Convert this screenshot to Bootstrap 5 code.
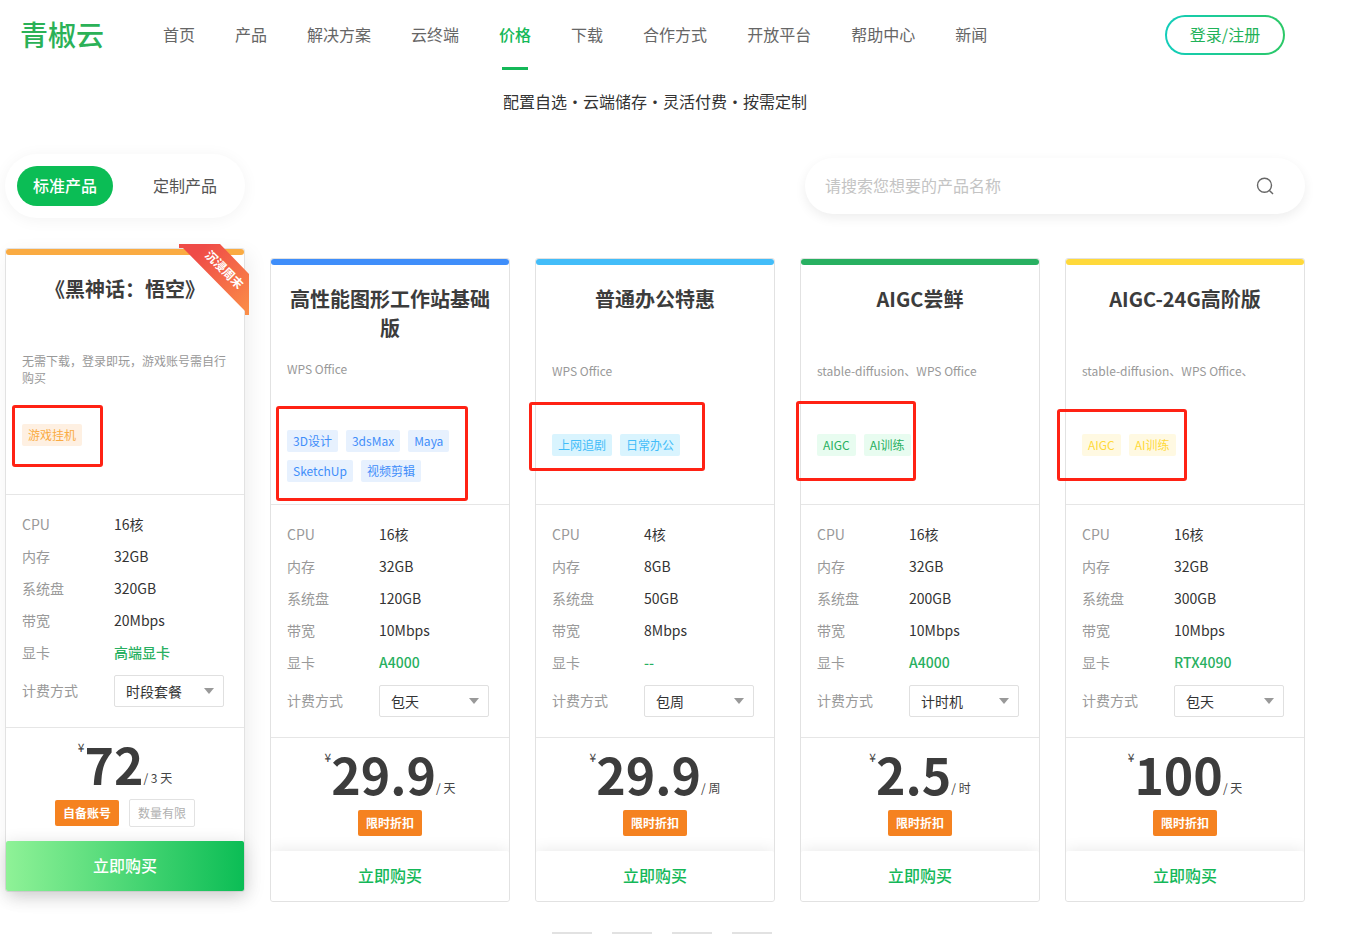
<!DOCTYPE html>
<html lang="zh-CN">
<head>
<meta charset="utf-8">
<meta name="viewport" content="width=device-width, initial-scale=1">
<title>青椒云 - 价格</title>
<link href="https://cdn.jsdelivr.net/npm/bootstrap@5.3.0/dist/css/bootstrap.min.css" rel="stylesheet">
<style>
  body { font-family: "Noto Sans CJK SC", sans-serif; font-size: 14px; color: #333; background: #fff; overflow-x: hidden; }
  a { text-decoration: none; }
  .page { padding-left: 5px; padding-right: 54px; }

  .site-bar { height: 70px; padding: 0 20px 0 15px; }
  .brand { font-size: 28px; line-height: 40px; padding-bottom: 2px; font-weight: 500; color: #2bb157; margin-right: 59px; }
  .site-links { gap: 40px; font-size: 16px; }
  .site-links .nav-link { padding: 0 0 2px; line-height: 68px; color: #666; position: relative; white-space: nowrap; }
  .site-links .nav-link.active { color: #14b858; font-weight: 500; }
  .site-links .nav-link.active::after { content: ""; position: absolute; left: 3px; right: 3px; bottom: 0; height: 3px; background: #14b858; }
  .btn-login { width: 120px; height: 40px; padding: 0 0 2px; font-size: 16px; border: 2px solid transparent; border-radius: 20px; color: #1fb259;
    background: linear-gradient(#fff, #fff) padding-box, linear-gradient(90deg, #12cdbb, #2bc866) border-box; }

  .slogan { font-size: 16px; line-height: 24px; margin: 19px 0 41px; }

  .switch { gap: 24px; padding: 12px; border-radius: 32px; box-shadow: 0 2px 16px rgba(0,0,0,.05); }
  .switch .btn { width: 96px; height: 40px; padding: 0 0 2px; border: 0; border-radius: 20px; font-size: 16px; color: #555; }
  .switch .btn.active { background: #0bbd55; color: #fff; font-weight: 500; }
  .finder { width: 500px; height: 56px; padding: 0 30px 0 20px; border-radius: 28px; box-shadow: 0 4px 12px rgba(0,0,0,.07); }
  .finder .form-control { padding: 0 0 2px; border: 0; box-shadow: none; font-size: 16px; background: transparent; }
  .finder .form-control::placeholder { color: #c4c4c4; }

  .plans { display: grid; grid-template-columns: repeat(5, minmax(0, 1fr)); gap: 25px; margin-top: 40px; align-items: start; }
  .plan { --tone: #3f8efa; --tint: #e7f1fe; position: relative; border: 1px solid #e2e2e2; border-radius: 3px; background: #fff; }
  .plan::before { content: ""; display: block; height: 6px; border-radius: 3px; background: var(--tone); }
  .plan.orange { --tone: #faab42; --tint: #fef0e2; }
  .plan.sky { --tone: #43bdf9; --tint: #d9f4fe; }
  .plan.green { --tone: #28b061; --tint: #e8fcf0; }
  .plan.yellow { --tone: #ffd93b; --tint: #fff9e2; }
  .plan.hot { margin-top: -10px; box-shadow: 4px 6px 20px rgba(0,0,0,.07); }

  .plan-head { height: 240px; padding: 19px 16px 0; border-bottom: 1px solid #e6e6e6; }
  .plan-title { font-size: 20px; line-height: 29px; min-height: 60px; margin: 0 0 18px; font-weight: 700; color: #3c3c3c; text-align: center; }
  .two-line { margin-bottom: 16px; }
  .plan-note { font-size: 12px; line-height: 17px; min-height: 72px; margin: 0; color: #999; }
  .two-line + .plan-note { min-height: 70px; }
  .tag { height: 22px; padding: 0 6px; border-radius: 2px; font-size: 12px; line-height: 22px; background: var(--tint); color: var(--tone); }
  .marker { position: absolute; border: 3px solid #ff2214; border-radius: 3px; pointer-events: none; }
  .orange .marker { left: 6px; top: 156px; width: 91px; height: 62px; }
  .blue .marker { left: 5px; top: 147px; width: 192px; height: 95px; }
  .sky .marker { left: -7px; top: 143px; width: 176px; height: 69px; }
  .green .marker { left: -5px; top: 142px; width: 120px; height: 80px; }
  .yellow .marker { left: -9px; top: 150px; width: 130px; height: 72px; }

  .specs { height: 233px; padding: 13px 16px 0; border-bottom: 1px solid #e6e6e6; }
  .specs dl { display: grid; grid-template-columns: 92px 1fr; line-height: 32px; margin: 0 0 7px; }
  .specs dt, .specs label { font-weight: 400; color: #999; }
  .specs dd { margin: 0; }
  .specs .gpu { color: #28b061; font-weight: 500; }
  .specs label { width: 92px; padding-bottom: 2px; }
  .specs .form-select { width: 110px; height: 32px; padding: 0 24px 0 11px; border-color: #e0e0e0; border-radius: 2px; font-size: 14px; line-height: 30px; color: #333;
    background-size: 10px 6px; background-position: right 9px center;
    background-image: url("data:image/svg+xml,%3Csvg xmlns='http://www.w3.org/2000/svg' viewBox='0 0 10 6'%3E%3Cpath d='M0 0h10L5 6z' fill='%23999'/%3E%3C/svg%3E"); }

  .cost { height: 113px; padding-top: 9px; }
  .cost-row { height: 54px; font-size: 12px; color: #444; }
  .cost-row strong { font-size: 50px; line-height: 52px; font-weight: 700; color: #3c3c3c; }
  .cost-row .coin { line-height: 20px; }
  .cost-row .per { line-height: 18px; padding-bottom: 4px; }
  .perks { height: 28px; gap: 10px; margin-top: 8px; font-size: 12px; }
  .perk { width: 64px; line-height: 26px; border-radius: 2px; text-align: center; background: #f58220; color: #fff; font-weight: 700; }
  .perk-line { width: 66px; line-height: 26px; border: 1px solid #e2e2e2; border-radius: 2px; text-align: center; color: #b0b0b0; }
  .btn-buy { height: 50px; padding: 0 0 2px; border: 0; border-radius: 2px; font-size: 16px; font-weight: 500; color: #14b858; background: #fff; box-shadow: 0 0 16px rgba(0,0,0,.1); clip-path: inset(-16px 0 0 0); }
  .hot .btn-buy { color: #fff; background: linear-gradient(90deg, #8ff297, #0bbd55); box-shadow: 0 4px 18px rgba(0,0,0,.16); clip-path: none; }

  .ribbon { position: absolute; right: -5px; top: -5px; width: 70px; height: 71px; }
  .pager { gap: 20px; margin: 30px 0 0 14px; }
  .pager button { width: 40px; height: 2px; padding: 0; border: 0; background: #e2e2e2; }
</style>
</head>
<body>
<header class="page">
  <nav class="site-bar d-flex align-items-center">
    <a class="brand" href="#">青椒云</a>
    <div class="nav site-links flex-nowrap">
      <a class="nav-link" href="#">首页</a>
      <a class="nav-link" href="#">产品</a>
      <a class="nav-link" href="#">解决方案</a>
      <a class="nav-link" href="#">云终端</a>
      <a class="nav-link active" href="#" aria-current="page">价格</a>
      <a class="nav-link" href="#">下载</a>
      <a class="nav-link" href="#">合作方式</a>
      <a class="nav-link" href="#">开放平台</a>
      <a class="nav-link" href="#">帮助中心</a>
      <a class="nav-link" href="#">新闻</a>
    </div>
    <button class="btn btn-login ms-auto" type="button">登录/注册</button>
  </nav>
</header>

<main class="page">
  <p class="slogan text-center">配置自选・云端储存・灵活付费・按需定制</p>

  <div class="d-flex justify-content-between align-items-center">
    <div class="switch d-flex">
      <button class="btn active" type="button">标准产品</button>
      <button class="btn" type="button">定制产品</button>
    </div>
    <form class="finder d-flex align-items-center" role="search">
      <input class="form-control" type="text" placeholder="请搜索您想要的产品名称" aria-label="产品名称">
      <button class="btn p-0 border-0 lh-1" type="button" aria-label="搜索">
        <svg width="20" height="20" viewBox="0 0 20 20" fill="none" stroke="#666" stroke-width="1.4"><circle cx="9.5" cy="9.3" r="7"/><path d="M14.4 14.4 18 18"/></svg>
      </button>
    </form>
  </div>

  <section class="plans">
    <article class="plan orange hot">
      <div class="plan-head">
        <h2 class="plan-title">《黑神话：悟空》</h2>
        <p class="plan-note">无需下载，登录即玩，游戏账号需自行购买</p>
        <div class="d-flex flex-wrap gap-2"><span class="tag">游戏挂机</span></div>
      </div>
      <div class="specs">
        <dl><dt>CPU</dt><dd>16核</dd><dt>内存</dt><dd>32GB</dd><dt>系统盘</dt><dd>320GB</dd><dt>带宽</dt><dd>20Mbps</dd><dt>显卡</dt><dd class="gpu">高端显卡</dd></dl>
        <div class="d-flex align-items-center"><label for="bill1">计费方式</label><select class="form-select" id="bill1"><option>时段套餐</option></select></div>
      </div>
      <div class="cost">
        <div class="cost-row d-flex justify-content-center"><span class="coin">¥</span><strong>72</strong><span class="per align-self-end">/ 3 天</span></div>
        <div class="perks d-flex justify-content-center align-items-center"><span class="perk">自备账号</span><span class="perk-line">数量有限</span></div>
      </div>
      <button class="btn btn-buy d-block w-100" type="button">立即购买</button>
      <svg class="ribbon" viewBox="0 0 70 71">
        <defs><linearGradient id="rib" x1="0" y1="0" x2="1" y2="1"><stop offset=".2" stop-color="#ef4b47"/><stop offset="1" stop-color="#fb8f48"/></linearGradient></defs>
        <path d="M0 0H41L70 30V71H66V67L4 4H0Z" fill="url(#rib)"/>
        <text transform="translate(45 26) rotate(45)" text-anchor="middle" y="4" font-size="12" font-weight="700" fill="#fff">沉浸周末</text>
      </svg>
      <div class="marker"></div>
    </article>

    <article class="plan blue">
      <div class="plan-head">
        <h2 class="plan-title two-line">高性能图形工作站基础版</h2>
        <p class="plan-note">WPS Office</p>
        <div class="d-flex flex-wrap gap-2"><span class="tag">3D设计</span><span class="tag">3dsMax</span><span class="tag">Maya</span><span class="tag">SketchUp</span><span class="tag">视频剪辑</span></div>
      </div>
      <div class="specs">
        <dl><dt>CPU</dt><dd>16核</dd><dt>内存</dt><dd>32GB</dd><dt>系统盘</dt><dd>120GB</dd><dt>带宽</dt><dd>10Mbps</dd><dt>显卡</dt><dd class="gpu">A4000</dd></dl>
        <div class="d-flex align-items-center"><label for="bill2">计费方式</label><select class="form-select" id="bill2"><option>包天</option></select></div>
      </div>
      <div class="cost">
        <div class="cost-row d-flex justify-content-center"><span class="coin">¥</span><strong>29.9</strong><span class="per align-self-end">/ 天</span></div>
        <div class="perks d-flex justify-content-center align-items-center"><span class="perk">限时折扣</span></div>
      </div>
      <button class="btn btn-buy d-block w-100" type="button">立即购买</button>
      <div class="marker"></div>
    </article>

    <article class="plan sky">
      <div class="plan-head">
        <h2 class="plan-title">普通办公特惠</h2>
        <p class="plan-note">WPS Office</p>
        <div class="d-flex flex-wrap gap-2"><span class="tag">上网追剧</span><span class="tag">日常办公</span></div>
      </div>
      <div class="specs">
        <dl><dt>CPU</dt><dd>4核</dd><dt>内存</dt><dd>8GB</dd><dt>系统盘</dt><dd>50GB</dd><dt>带宽</dt><dd>8Mbps</dd><dt>显卡</dt><dd class="gpu">--</dd></dl>
        <div class="d-flex align-items-center"><label for="bill3">计费方式</label><select class="form-select" id="bill3"><option>包周</option></select></div>
      </div>
      <div class="cost">
        <div class="cost-row d-flex justify-content-center"><span class="coin">¥</span><strong>29.9</strong><span class="per align-self-end">/ 周</span></div>
        <div class="perks d-flex justify-content-center align-items-center"><span class="perk">限时折扣</span></div>
      </div>
      <button class="btn btn-buy d-block w-100" type="button">立即购买</button>
      <div class="marker"></div>
    </article>

    <article class="plan green">
      <div class="plan-head">
        <h2 class="plan-title">AIGC尝鲜</h2>
        <p class="plan-note">stable-diffusion、WPS Office</p>
        <div class="d-flex flex-wrap gap-2"><span class="tag">AIGC</span><span class="tag">AI训练</span></div>
      </div>
      <div class="specs">
        <dl><dt>CPU</dt><dd>16核</dd><dt>内存</dt><dd>32GB</dd><dt>系统盘</dt><dd>200GB</dd><dt>带宽</dt><dd>10Mbps</dd><dt>显卡</dt><dd class="gpu">A4000</dd></dl>
        <div class="d-flex align-items-center"><label for="bill4">计费方式</label><select class="form-select" id="bill4"><option>计时机</option></select></div>
      </div>
      <div class="cost">
        <div class="cost-row d-flex justify-content-center"><span class="coin">¥</span><strong>2.5</strong><span class="per align-self-end">/ 时</span></div>
        <div class="perks d-flex justify-content-center align-items-center"><span class="perk">限时折扣</span></div>
      </div>
      <button class="btn btn-buy d-block w-100" type="button">立即购买</button>
      <div class="marker"></div>
    </article>

    <article class="plan yellow">
      <div class="plan-head">
        <h2 class="plan-title">AIGC-24G高阶版</h2>
        <p class="plan-note">stable-diffusion、WPS Office、</p>
        <div class="d-flex flex-wrap gap-2"><span class="tag">AIGC</span><span class="tag">AI训练</span></div>
      </div>
      <div class="specs">
        <dl><dt>CPU</dt><dd>16核</dd><dt>内存</dt><dd>32GB</dd><dt>系统盘</dt><dd>300GB</dd><dt>带宽</dt><dd>10Mbps</dd><dt>显卡</dt><dd class="gpu">RTX4090</dd></dl>
        <div class="d-flex align-items-center"><label for="bill5">计费方式</label><select class="form-select" id="bill5"><option>包天</option></select></div>
      </div>
      <div class="cost">
        <div class="cost-row d-flex justify-content-center"><span class="coin">¥</span><strong>100</strong><span class="per align-self-end">/ 天</span></div>
        <div class="perks d-flex justify-content-center align-items-center"><span class="perk">限时折扣</span></div>
      </div>
      <button class="btn btn-buy d-block w-100" type="button">立即购买</button>
      <div class="marker"></div>
    </article>
  </section>

  <div class="pager d-flex justify-content-center">
    <button type="button" aria-label="第1页"></button><button type="button" aria-label="第2页"></button><button type="button" aria-label="第3页"></button><button type="button" aria-label="第4页"></button>
  </div>
</main>
<script src="https://cdn.jsdelivr.net/npm/bootstrap@5.3.0/dist/js/bootstrap.bundle.min.js"></script>
</body>
</html>
